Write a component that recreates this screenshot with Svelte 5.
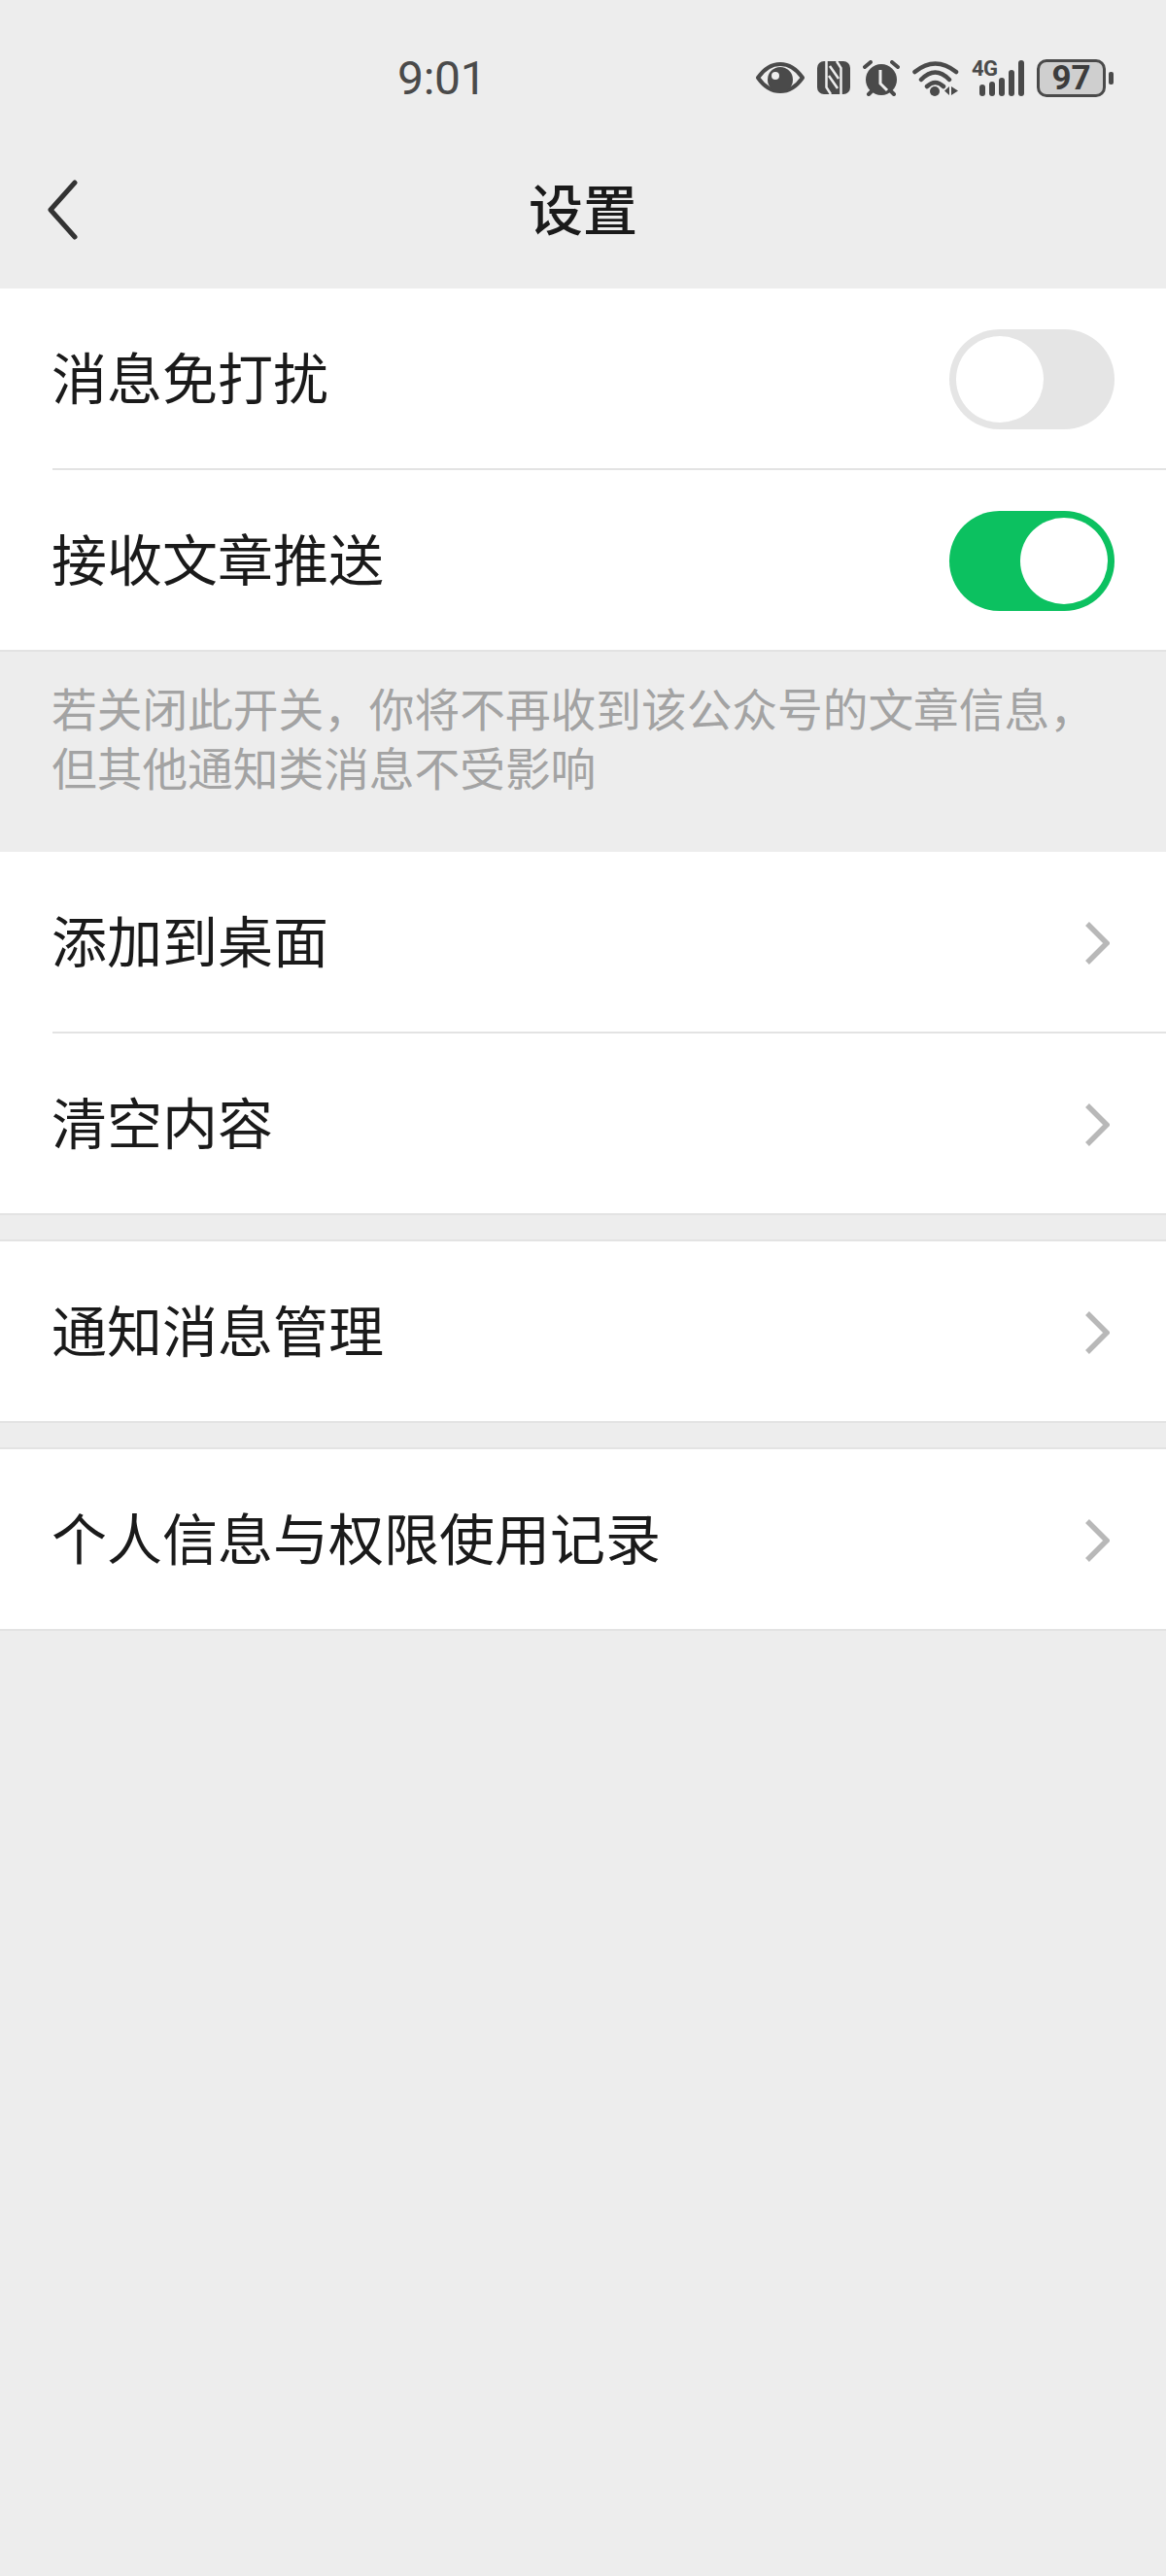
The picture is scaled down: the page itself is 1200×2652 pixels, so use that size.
<script lang="ts">
  const groups = [
    ["添加到桌面", "清空内容"],
    ["通知消息管理"],
    ["个人信息与权限使用记录"],
  ];
</script>

<div class="page">
  <div class="status">
    <span class="time">9:01</span>
    <div class="icons">
      <svg width="50" height="34" viewBox="0 0 50 34">
        <path d="M2 17C9 7 16 3 25 3s16 4 23 14c-7 10-14 14-23 14S9 27 2 17Z" fill="none" stroke="#4a4a4a" stroke-width="4" stroke-linejoin="round" />
        <circle cx="25" cy="19" r="13" fill="#4a4a4a" />
        <circle cx="20" cy="15" r="4" fill="#ededed" />
      </svg>
      <svg width="34" height="34" viewBox="0 0 34 34">
        <rect width="34" height="34" rx="7" fill="#4a4a4a" />
        <path d="M9.500 0V27L14 34M24.500 34V7L20 0M13 5 22 18M12 15 21 28" fill="none" stroke="#ededed" stroke-width="2.500" />
      </svg>
      <svg width="38" height="37" viewBox="0 0 38 37">
        <circle cx="19" cy="20" r="16" fill="#4a4a4a" />
        <path d="M18 10V24L25 31" fill="none" stroke="#ededed" stroke-width="3" />
        <path d="M2 7 8 2M36 7 30 2M6 35 9 32M32 35 29 32" fill="none" stroke="#4a4a4a" stroke-width="4" stroke-linecap="round" />
      </svg>
      <svg width="48" height="37" viewBox="0 0 48 37">
        <path d="M2.500 12Q23.500-5 45 12M9 20Q23.500 5 38 20M15 27Q23.500 19 32 27" fill="none" stroke="#4a4a4a" stroke-width="4.500" stroke-linecap="round" />
        <circle cx="23" cy="32" r="5" fill="#4a4a4a" />
        <path d="M38 27v9l-5-4.500ZM40 27v9l7-4.500Z" fill="#4a4a4a" />
      </svg>
      <div class="signal">
        <span class="net">4G</span>
        <svg width="46" height="37" viewBox="0 0 46 37">
          <rect x="0" y="25" width="6" height="12" rx="3" fill="#4a4a4a" />
          <rect x="10" y="22" width="6" height="15" rx="3" fill="#4a4a4a" />
          <rect x="20" y="18" width="6" height="19" rx="3" fill="#4a4a4a" />
          <rect x="30" y="10" width="6" height="27" rx="3" fill="#4a4a4a" />
          <rect x="40" y="0" width="6" height="37" rx="3" fill="#4a4a4a" />
        </svg>
      </div>
      <div class="battery-wrap">
        <div class="battery">97</div>
        <span class="nub"></span>
      </div>
    </div>
  </div>

  <div class="nav">
    <svg class="back" width="34" height="62" viewBox="0 0 34 62">
      <path d="M30 3 5 31l25 28" fill="none" stroke="#333" stroke-width="5" stroke-linecap="round" stroke-linejoin="round" />
    </svg>
    <span class="title">设置</span>
  </div>

  <div class="group">
    <div class="row inset">
      <span class="label">消息免打扰</span>
      <span class="toggle"><i></i></span>
    </div>
    <div class="row">
      <span class="label">接收文章推送</span>
      <span class="toggle on"><i></i></span>
    </div>
  </div>

  <p class="note">若关闭此开关，你将不再收到该公众号的文章信息，<br />但其他通知类消息不受影响</p>

  {#each groups as rows}
    <div class="group spaced">
      {#each rows as label, i}
        <div class="row" class:inset={i < rows.length - 1}>
          <span class="label">{label}</span>
          <svg class="chevron" width="26" height="46" viewBox="0 0 26 46">
            <path d="M3 3l20 20L3 43" fill="none" stroke="#b8b8b8" stroke-width="5.500" />
          </svg>
        </div>
      {/each}
    </div>
  {/each}
</div>

<style>
  :global(body) {
    margin: 0;
    background: #ededed;
  }

  .page {
    height: 2652px;
    background: #ededed;
    font-family: "Noto Sans CJK SC", "Liberation Sans", sans-serif;
    color: #1a1a1a;
    overflow: hidden;
  }

  .status {
    height: 160px;
    padding: 0 54px 0 409px;
    display: flex;
    align-items: center;
    justify-content: space-between;
    box-sizing: border-box;
    color: #4a4a4a;
  }

  .time {
    font-family: Roboto, sans-serif;
    font-size: 48px;
    letter-spacing: -0.3px;
  }

  .icons {
    display: flex;
    align-items: center;
    gap: 13px;
  }

  .signal {
    position: relative;
    width: 54px;
    height: 37px;
    display: flex;
    justify-content: flex-end;
  }

  .net {
    position: absolute;
    left: 0;
    top: -2px;
    font-family: Roboto, sans-serif;
    font-size: 22px;
    font-weight: 700;
    line-height: 22px;
    letter-spacing: -0.5px;
  }

  .battery-wrap {
    display: flex;
    align-items: center;
    gap: 3px;
  }

  .battery {
    width: 71px;
    height: 39px;
    box-sizing: border-box;
    border: 3px solid #4a4a4a;
    border-radius: 10px;
    background: #cfcfcf;
    font-family: Roboto, sans-serif;
    font-size: 35px;
    font-weight: 700;
    line-height: 33px;
    text-align: center;
    color: #3c3c3c;
  }

  .nub {
    width: 5px;
    height: 13px;
    border-radius: 2px;
    background: #4a4a4a;
  }

  .nav {
    height: 137px;
    padding-bottom: 31px;
    box-sizing: border-box;
    position: relative;
    display: flex;
    align-items: center;
    justify-content: center;
  }

  .back {
    position: absolute;
    left: 47px;
    top: 25px;
  }

  .title {
    font-size: 56px;
    font-weight: 500;
    line-height: 1;
  }

  .group {
    background: #fff;
    border-bottom: 2px solid #e3e3e3;
  }

  .spaced {
    margin-bottom: 27px;
  }

  .spaced + .spaced {
    box-shadow: 0 -2px 0 #e3e3e3;
  }

  .row {
    height: 183px;
    margin-left: 54px;
    padding: 2px 53px 0 0;
    display: flex;
    align-items: center;
    justify-content: space-between;
    font-size: 57px;
    line-height: 1;
  }

  .label {
    margin-left: -1px;
    padding-bottom: 9px;
  }

  .inset {
    border-bottom: 2px solid #e3e3e3;
  }

  .toggle {
    width: 170px;
    height: 103px;
    border-radius: 52px;
    background: #e5e5e5;
    padding: 7px;
    box-sizing: border-box;
    display: flex;
  }

  .toggle i {
    width: 90px;
    height: 89px;
    border-radius: 50%;
    background: #fff;
  }

  .toggle.on {
    background: #0cc160;
    justify-content: flex-end;
  }

  .chevron {
    margin-right: 5px;
  }

  .note {
    height: 206px;
    margin: 0;
    padding: 26px 53px 0;
    box-sizing: border-box;
    font-size: 46.7px;
    line-height: 61px;
    color: #a3a3a3;
    white-space: nowrap;
  }
</style>
